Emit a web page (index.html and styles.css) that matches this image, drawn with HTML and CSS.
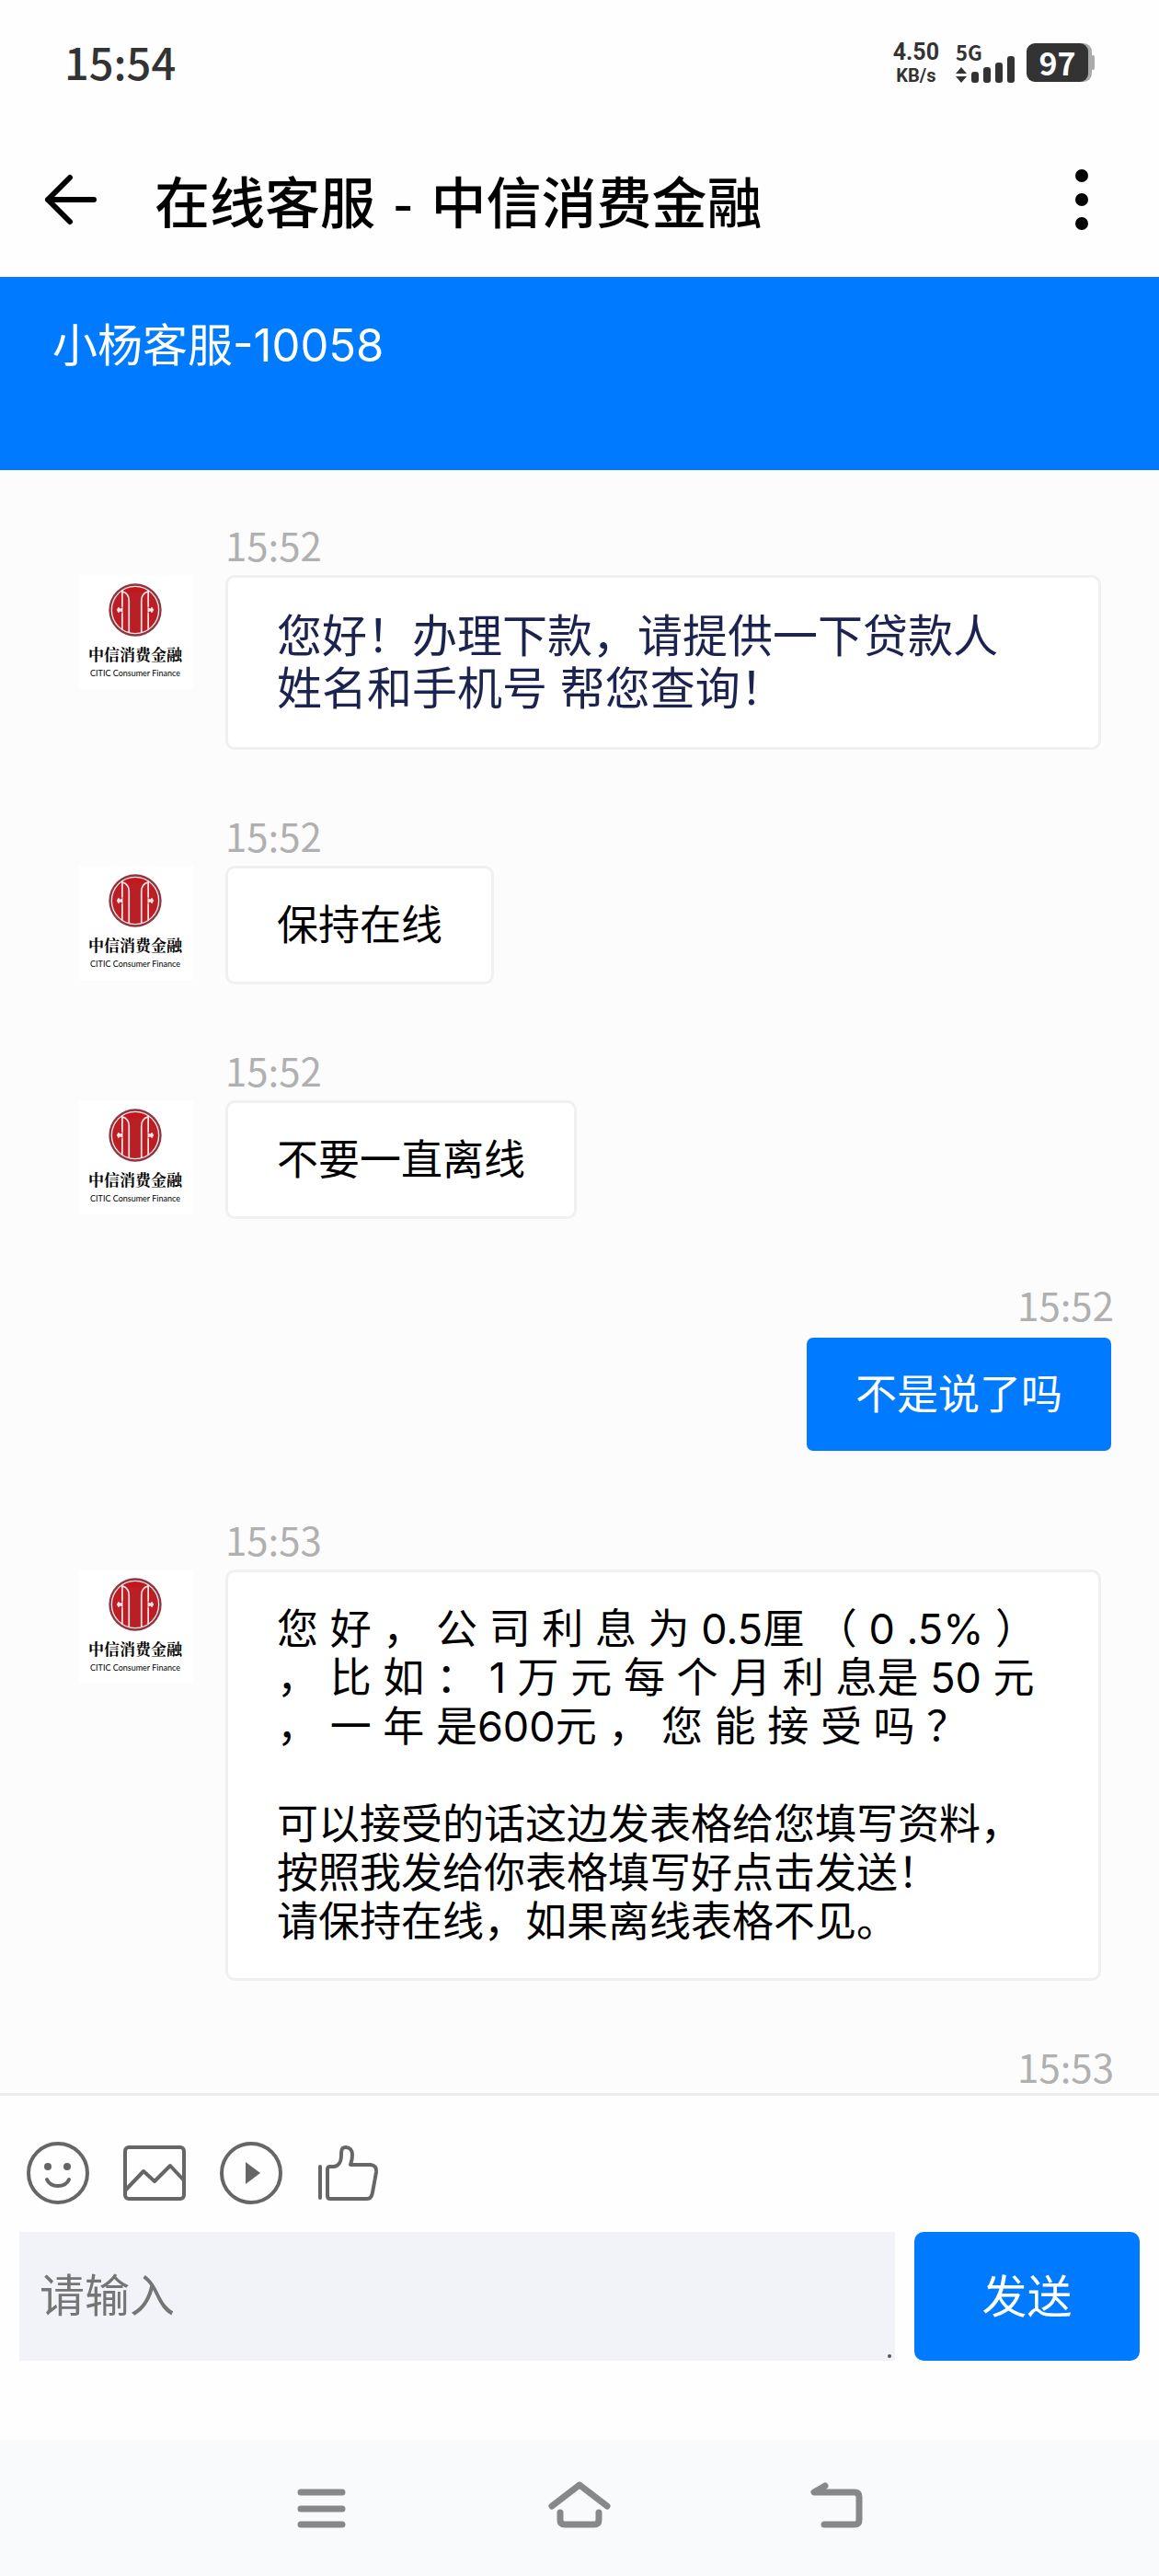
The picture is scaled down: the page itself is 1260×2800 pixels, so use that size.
FILE: index.html
```html
<!DOCTYPE html>
<html lang="zh-CN">
<head>
<meta charset="utf-8">
<meta name="viewport" content="width=device-width, initial-scale=1">
<title>在线客服 - 中信消费金融</title>
<link rel="stylesheet" href="styles.css">
</head>
<body>
<svg class="defs" aria-hidden="true">
  <symbol id="emblem" viewBox="0 0 172 172">
    <circle cx="86" cy="86" r="85" fill="#8f3540"/>
    <circle cx="86" cy="86" r="76" fill="#bb1f26" stroke="#fbe9ea" stroke-width="4"/>
    <g fill="none" stroke="#fbe9ea" stroke-width="5">
      <path d="M44 23V76M44 96V149M128 23V76M128 96V149"/>
      <path d="M45 27C58 30 66 42 66 56V159M127 27C114 30 106 42 106 56V159"/>
    </g>
    <path d="M50 24Q86 6 122 24Q86 38 50 24Z" fill="#c4161c"/>
    <path d="M26 86L32 76L38 82L46 76V96L38 90L32 96ZM146 86L140 76L134 82L126 76V96L134 90L140 96Z" fill="#fbe9ea"/>
  </symbol>
</svg>

<header class="status">
  <time class="status-clock">15:54</time>
  <div class="status-side">
    <div class="speed"><span class="speed-value">4.50</span><span class="speed-unit">KB/s</span></div>
    <div class="signal">
      <span class="signal-type">5G</span>
      <svg class="signal-bars" viewBox="0 0 64 30" aria-hidden="true">
        <path d="M6 13L12 20H0ZM6 30L0 23H12Z"/>
        <rect x="17" y="18" width="8" height="12" rx="3"/>
        <rect x="30" y="13" width="8" height="17" rx="3"/>
        <rect x="43" y="8" width="8" height="22" rx="3"/>
        <rect x="56" y="1" width="8" height="29" rx="3"/>
      </svg>
    </div>
    <div class="battery"><span class="battery-level">97</span></div>
  </div>
</header>

<div class="appbar">
  <button class="icon-button" type="button" aria-label="返回">
    <svg class="back-arrow" viewBox="0 0 58 56"><path d="M28 4L4 28L28 52M4 28H54"/></svg>
  </button>
  <h1 class="title">在线客服<span class="title-dash"> - </span>中信消费金融</h1>
  <button class="icon-button" type="button" aria-label="更多">
    <svg class="more-dots" viewBox="0 0 14 68"><circle cx="7" cy="8" r="7"/><circle cx="7" cy="34" r="7"/><circle cx="7" cy="60" r="7"/></svg>
  </button>
</div>

<div class="agent">小杨客服-10058</div>

<main class="chat">
  <article class="message">
    <time class="time">15:52</time>
    <div class="avatar"><svg class="emblem"><use href="#emblem"/></svg><span class="brand">中信消费金融</span><span class="brand-en">CITIC Consumer Finance</span></div>
    <p class="bubble bubble-notice">您好！办理下款，请提供一下贷款人<br>姓名和手机号 帮您查询！</p>
  </article>
  <article class="message">
    <time class="time">15:52</time>
    <div class="avatar"><svg class="emblem"><use href="#emblem"/></svg><span class="brand">中信消费金融</span><span class="brand-en">CITIC Consumer Finance</span></div>
    <p class="bubble">保持在线</p>
  </article>
  <article class="message">
    <time class="time">15:52</time>
    <div class="avatar"><svg class="emblem"><use href="#emblem"/></svg><span class="brand">中信消费金融</span><span class="brand-en">CITIC Consumer Finance</span></div>
    <p class="bubble">不要一直离线</p>
  </article>
  <article class="message message-own">
    <time class="time">15:52</time>
    <p class="bubble">不是说了吗</p>
  </article>
  <article class="message">
    <time class="time">15:53</time>
    <div class="avatar"><svg class="emblem"><use href="#emblem"/></svg><span class="brand">中信消费金融</span><span class="brand-en">CITIC Consumer Finance</span></div>
    <p class="bubble bubble-wide">您 好 ， 公 司 利 息 为 0.5厘 （ 0 .5% ）<br>， 比 如 ： 1 万 元 每 个 月 利 息是 50 元<br>， 一 年 是600元 ， 您 能 接 受 吗 ？<br><br>可以接受的话这边发表格给您填写资料，<br>按照我发给你表格填写好点击发送！<br>请保持在线，如果离线表格不见。</p>
  </article>
  <article class="message message-own">
    <time class="time">15:53</time>
  </article>
</main>

<form class="composer">
  <div class="tools">
    <button class="icon-button" type="button" aria-label="表情">
      <svg class="tool" viewBox="0 0 68 68"><circle cx="34" cy="34" r="32"/><path d="M22 41Q25 48 34 48T46 41"/><g class="solid"><circle cx="23" cy="27" r="4"/><circle cx="44" cy="27" r="4"/></g></svg>
    </button>
    <button class="icon-button" type="button" aria-label="图片">
      <svg class="tool" viewBox="0 0 68 68"><rect x="2" y="6" width="64" height="56" rx="4"/><path d="M3 52L22 32L34 43L51 26L65 41"/></svg>
    </button>
    <button class="icon-button" type="button" aria-label="视频">
      <svg class="tool" viewBox="0 0 68 68"><circle cx="34" cy="34" r="32"/><path class="solid" d="M28 22L44 34L28 46Z"/></svg>
    </button>
    <button class="icon-button" type="button" aria-label="点赞">
      <svg class="tool" viewBox="0 0 68 68"><path d="M4 27V61M12 59V30Q12 27 15 27H19C25 26 27 22 27 14C27 8 28 6 32 6C36 6 39 9 39 14Q39 20 37 25H59Q66 26 65 33L61 55Q60 62 55 62H15Q12 62 12 59Z"/></svg>
    </button>
  </div>
  <div class="entry">
    <div class="field"><textarea class="input" rows="1" placeholder="请输入" aria-label="请输入"></textarea></div>
    <button class="send" type="submit">发送</button>
  </div>
</form>

<nav class="system-nav">
  <button class="icon-button" type="button" aria-label="最近任务">
    <svg class="nav-icon" viewBox="0 0 68 56"><path d="M11 12H56M11 30H56M11 47H56"/></svg>
  </button>
  <button class="icon-button" type="button" aria-label="主屏幕">
    <svg class="nav-icon" viewBox="0 0 68 56"><path d="M4 27L34 4L64 27M13 34V42Q13 47 18 47H50Q55 47 55 42V34"/></svg>
  </button>
  <button class="icon-button" type="button" aria-label="返回上一页">
    <svg class="nav-icon" viewBox="0 0 68 56"><path d="M21 5L9 12H53Q58 12 58 17V42Q58 47 53 47H20"/></svg>
  </button>
</nav>
</body>
</html>
```
FILE: styles.css
```css
:root {
  --blue: #007aff;
  --ink: #333;
  --text: 45px;
  --text-large: 49px;
  --latin: Inter, "Noto Sans CJK SC", sans-serif;
  --cjk: "Noto Sans CJK SC", sans-serif;
}

* { box-sizing: border-box; }

body {
  margin: 0;
  min-height: 100vh;
  display: flex;
  flex-direction: column;
  background: #fefefe;
  color: #000;
  font-family: var(--latin);
  font-size: var(--text);
  line-height: 53px;
}

svg { display: block; }
.defs { position: absolute; width: 0; height: 0; }

.icon-button {
  display: flex;
  padding: 0;
  border: 0;
  background: none;
  color: inherit;
}

/* Phone status bar */
.status {
  display: flex;
  align-items: center;
  justify-content: space-between;
  height: 132px;
  padding: 0 70px;
  color: var(--ink);
  fill: var(--ink);
  font-family: var(--cjk);
}
.status-clock { font-size: 47px; font-weight: 500; }
.status-side { display: flex; align-items: center; gap: 13px; padding-top: 4px; }
.speed {
  display: flex;
  flex-direction: column;
  align-items: center;
  margin-right: 5px;
  font-family: Roboto, sans-serif;
  font-weight: 700;
}
.speed-value { font-size: 25px; line-height: 29px; }
.speed-unit { font-size: 20px; line-height: 23px; }
.signal { display: flex; flex-direction: column; font-weight: 700; }
.signal-type { font-size: 22px; line-height: 20px; }
.signal-bars { width: 64px; height: 30px; margin-top: -6px; }
.battery {
  position: relative;
  display: flex;
  align-items: center;
  justify-content: center;
  width: 67px;
  height: 42px;
  margin-right: 7px;
  border-radius: 9px;
  background: var(--ink);
  box-shadow: 4px 0 0 #aaa;
  color: #fff;
}
.battery::after {
  content: "";
  position: absolute;
  left: 70px;
  top: 13px;
  width: 4px;
  height: 16px;
  border-radius: 2px;
  background: #aaa;
}
.battery-level { font-size: 34px; font-weight: 700; line-height: 40px; }

/* App title bar */
.appbar {
  display: flex;
  align-items: center;
  height: 169px;
  padding: 0 77px 0 48px;
}
.back-arrow {
  width: 58px;
  height: 56px;
  fill: none;
  stroke: #000;
  stroke-width: 6;
  stroke-linecap: round;
  stroke-linejoin: round;
}
.more-dots { width: 14px; height: 68px; }
.title {
  flex: 1;
  margin: 0 0 0 62px;
  font-family: var(--cjk);
  font-size: 60px;
  font-weight: 500;
  line-height: 80px;
}
.title-dash { padding: 0 6px; white-space: pre; }

.agent {
  min-height: 210px;
  padding: 46px 57px;
  background: var(--blue);
  color: #fff;
  font-size: var(--text-large);
  line-height: 57px;
}

/* Conversation */
.chat {
  flex: 1;
  display: flex;
  flex-direction: column;
  gap: 67px;
  padding: 55px 49px 1px 86px;
  background: #fcfcfc;
}
.message {
  display: grid;
  grid-template-columns: 124px 1fr;
  column-gap: 35px;
  row-gap: 7px;
  justify-items: start;
  align-items: start;
}
.time {
  grid-column: 2;
  color: #b0b0b0;
  font-family: var(--cjk);
  font-size: 42px;
  line-height: 52px;
}
.avatar {
  display: flex;
  flex-direction: column;
  align-items: center;
  justify-self: stretch;
  height: 124px;
  padding: 9px 2px 0 0;
  background: #fff;
}
.emblem { width: 58px; height: 58px; }
.brand {
  margin-top: 7px;
  font-family: "Noto Serif CJK SC", "Noto Sans CJK SC", serif;
  font-size: 17px;
  font-weight: 700;
  line-height: 24px;
  white-space: nowrap;
}
.brand-en {
  font-family: Lato, sans-serif;
  font-size: 9px;
  line-height: 18px;
  white-space: nowrap;
}
.bubble {
  margin: 0 14px 0 0;
  padding: 35px 53px;
  border: 3px solid #f0f0f0;
  border-radius: 10px;
  background: #fff;
}
.bubble-notice {
  justify-self: stretch;
  color: #1c234f;
  font-size: var(--text-large);
  line-height: 57px;
}
.bubble-wide { justify-self: stretch; padding-right: 20px; }
.message-own { justify-items: end; }
.message-own .bubble {
  grid-column: 2;
  margin: 0;
  border-color: transparent;
  background: var(--blue) padding-box;
  color: #fff;
}

/* Message entry */
.composer {
  display: flex;
  flex-direction: column;
  gap: 30px;
  padding: 50px 21px 86px;
  border-top: 3px solid #ececec;
}
.tools { display: flex; gap: 37px; padding-left: 8px; }
.tool {
  width: 68px;
  height: 68px;
  fill: none;
  stroke: #666;
  stroke-width: 4;
  stroke-linecap: round;
  stroke-linejoin: round;
}
.solid { fill: #666; stroke: none; }
.entry { display: flex; gap: 21px; }
.field { position: relative; flex: 1; display: flex; }
.field::after {
  content: "";
  position: absolute;
  right: 4px;
  bottom: 3px;
  width: 4px;
  height: 4px;
  border-radius: 2px;
  background: #555;
}
.input {
  flex: 1;
  min-width: 0;
  height: 140px;
  padding: 41px 22px;
  border: 0;
  background: #f2f3f8;
  resize: none;
  font-family: var(--latin);
  font-size: var(--text-large);
  line-height: 57px;
}
.input::placeholder { color: #757575; }
.send {
  width: 245px;
  height: 140px;
  padding: 0;
  border: 0;
  border-radius: 10px;
  background: var(--blue);
  color: #fff;
  font-family: var(--latin);
  font-size: var(--text-large);
  line-height: 57px;
}

/* Phone navigation keys */
.system-nav {
  display: flex;
  align-items: center;
  justify-content: center;
  gap: 212px;
  height: 148px;
  padding-bottom: 2px;
  background: #f9fafc;
}
.nav-icon {
  width: 68px;
  height: 56px;
  fill: none;
  stroke: #888;
  stroke-width: 7;
  stroke-linecap: round;
  stroke-linejoin: round;
}
```
